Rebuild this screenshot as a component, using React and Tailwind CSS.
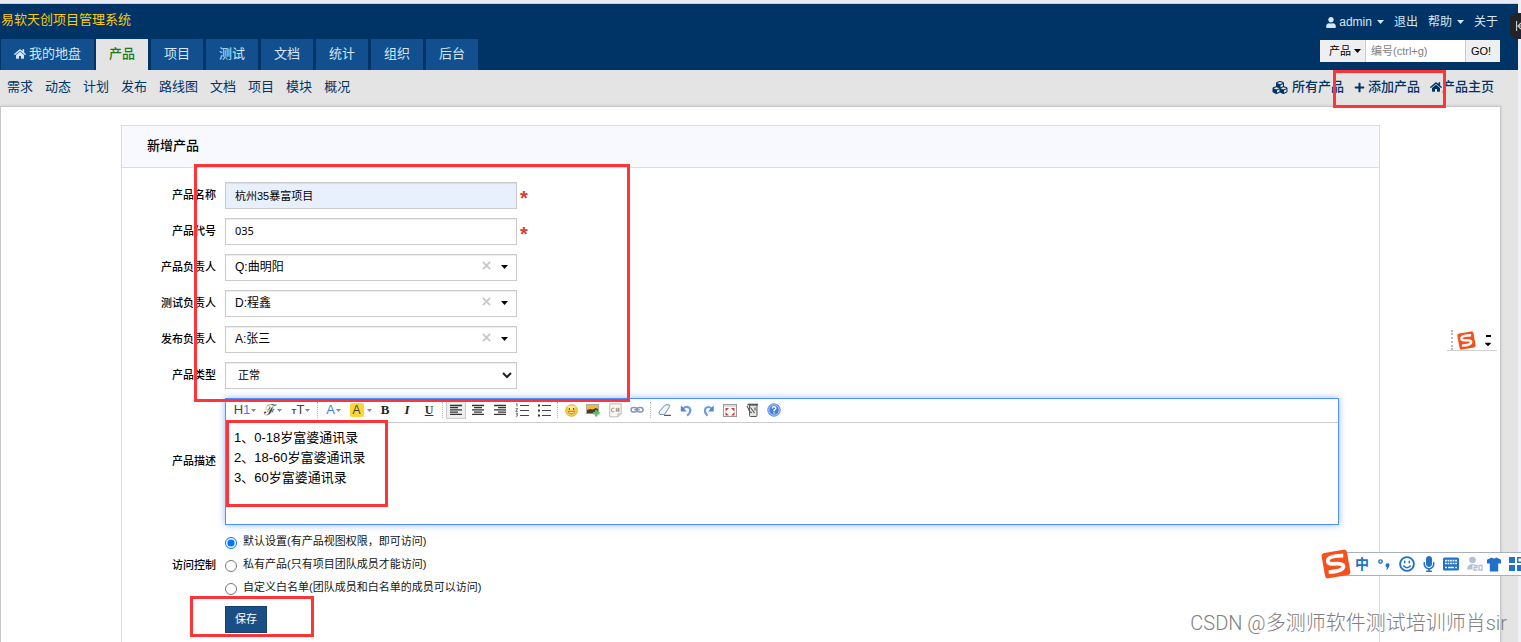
import { useState } from "react";
import {
  FaHome,
  FaUser,
  FaPlus,
  FaCubes,
  FaMicrophone,
  FaCaretDown,
} from "react-icons/fa";

const tabs = ["产品", "项目", "测试", "文档", "统计", "组织", "后台"];
const subMenu = ["需求", "动态", "计划", "发布", "路线图", "文档", "项目", "模块", "概况"];
const owners = [
  { id: "po", label: "产品负责人", value: "Q:曲明阳" },
  { id: "qd", label: "测试负责人", value: "D:程鑫" },
  { id: "rd", label: "发布负责人", value: "A:张三" },
];
const aclOptions = [
  { value: "open", text: "默认设置(有产品视图权限，即可访问)" },
  { value: "private", text: "私有产品(只有项目团队成员才能访问)" },
  { value: "custom", text: "自定义白名单(团队成员和白名单的成员可以访问)" },
];

const control =
  "block h-[27px] w-full border border-[#cbcbcb] pl-[9px] text-black shadow-[inset_0_1px_1px_rgba(0,0,0,0.08)] outline-none";

function Caret({ className = "" }) {
  return (
    <svg className={`h-1 w-[7px] ${className}`} viewBox="0 0 7 4" fill="currentColor">
      <path d="M0 0h7L3.5 4z" />
    </svg>
  );
}

function Header() {
  return (
    <header className="flex justify-between bg-[#003366] pl-px pr-[18px]">
      <div>
        <h1 className="flex h-[35px] items-center pb-1 text-[13px] leading-5 text-[#ffcc00]">
          易软天创项目管理系统
        </h1>
        <nav className="flex h-[31px] text-[13px] text-[#d5e6f5]">
          <a href="#my" className="mr-0.5 flex items-center gap-[3px] bg-[#114f8e] px-[13px] pb-0.5">
            <FaHome className="h-3 w-3" />
            我的地盘
          </a>
          {tabs.map((tab, i) => (
            <a
              key={tab}
              href="#tab"
              className={
                i === 0
                  ? "mr-[3px] flex items-center bg-[#e4e4e4] px-[13px] pb-0.5 font-medium text-[#1a7a1a]"
                  : "mr-[3px] flex items-center bg-[#114f8e] px-[13px] pb-0.5"
              }
            >
              {tab}
            </a>
          ))}
        </nav>
      </div>
      <div className="flex flex-col items-end">
        <div className="flex h-9 items-center gap-2.5 pr-0.5 text-[12px] text-[#d5e6f5]">
          <a href="#user" className="flex items-center">
            <FaUser className="mr-[3px] h-[11px] w-[10px]" />
            admin
            <Caret className="ml-[5px]" />
          </a>
          <a href="#logout">退出</a>
          <a href="#help" className="flex items-center">
            帮助
            <Caret className="ml-[5px]" />
          </a>
          <a href="#about">关于</a>
        </div>
        <form className="flex h-[22px] text-[11px]">
          <button
            type="button"
            className="flex w-[46px] items-center justify-end gap-[3px] border-r border-[#ccc] bg-[#efefef] pr-1 text-black"
          >
            产品 <Caret />
          </button>
          <input
            type="text"
            aria-label="编号"
            placeholder="编号(ctrl+g)"
            className="w-[99px] bg-white px-[5px] outline-none placeholder:text-[#808080]"
          />
          <button type="button" className="w-[35px] border-l border-[#ccc] bg-[#efefef] pr-1 text-black">
            GO!
          </button>
        </form>
      </div>
    </header>
  );
}

function SubHeader() {
  return (
    <div className="flex h-9 items-center justify-between pl-[7px] pr-6 pb-0.5 text-[13px] text-[#003366]">
      <nav className="flex gap-3">
        {subMenu.map((item) => (
          <a key={item} href="#sub">
            {item}
          </a>
        ))}
      </nav>
      <nav className="flex items-center gap-2.5 font-medium">
        <a href="#all" className="flex items-center gap-1">
          <FaCubes className="h-[15px] w-4" />
          所有产品
        </a>
        <a href="#create" className="flex items-center gap-[3px]">
          <FaPlus className="h-[11px] w-[11px]" />
          添加产品
        </a>
        <a href="#home" className="flex items-center">
          <FaHome className="h-3 w-3" />
          产品主页
        </a>
      </nav>
    </div>
  );
}

function Row({ label, htmlFor, className = "mb-[9px]", children }) {
  return (
    <div className={`flex items-center gap-[9px] ${className}`}>
      <label
        htmlFor={htmlFor}
        className="w-[94px] shrink-0 pb-0.5 text-right text-[11px] font-medium leading-4 text-black"
      >
        {label}
      </label>
      {children}
    </div>
  );
}

function ToolButton({ title, className = "w-[22px]", children }) {
  return (
    <button
      type="button"
      title={title}
      className={`flex h-5 shrink-0 items-center justify-center text-[#444] ${className}`}
    >
      {children}
    </button>
  );
}

function Separator() {
  return (
    <span className="flex h-4 w-[5px] shrink-0 justify-center">
      <i className="border-l border-dotted border-[#bbb]" />
    </span>
  );
}

function Lines({ d }) {
  return (
    <svg width="14" height="14" viewBox="0 0 14 14" stroke="#333" strokeWidth="1.3">
      <path d={d} />
    </svg>
  );
}

function SmallCaret() {
  return <Caret className="ml-px h-[3px]! w-[5px]! text-[#888]" />;
}

function Toolbar() {
  return (
    <div className="flex h-6 items-center overflow-hidden border-b border-[#ccc] pl-[5px] pb-px">
      <ToolButton title="段落" className="w-7 text-[13px]">
        H<span className="text-[#3f7fe0]">1</span>
        <SmallCaret />
      </ToolButton>
      <ToolButton title="字体" className="w-7 font-['Liberation_Serif',serif] text-[15px]">
        ℱ
        <SmallCaret />
      </ToolButton>
      <ToolButton title="文字大小" className="w-7 text-[13px]">
        <span className="self-end pb-0.5 text-[8px] font-bold">T</span>T
        <SmallCaret />
      </ToolButton>
      <Separator />
      <ToolButton title="文字颜色" className="w-[27px] text-[13px]">
        <span className="text-[#3f7fe0]">A</span>
        <SmallCaret />
      </ToolButton>
      <ToolButton title="文字背景" className="w-[27px] text-[12px]">
        <span className="mr-0.5 h-[14px] w-[14px] rounded-xs bg-[#fdd535] leading-[14px]">A</span>
        <SmallCaret />
      </ToolButton>
      <ToolButton title="粗体">
        <b className="font-['Liberation_Serif',serif] text-[13px] font-bold text-[#222]">B</b>
      </ToolButton>
      <ToolButton title="斜体">
        <i className="font-['Liberation_Serif',serif] text-[13px] font-bold text-[#222]">I</i>
      </ToolButton>
      <ToolButton title="下划线">
        <u className="font-['Liberation_Serif',serif] text-[12px] font-bold text-[#333]">U</u>
      </ToolButton>
      <Separator />
      <ToolButton title="左对齐">
        <span className="flex h-[18px] w-5 items-center justify-center border border-[#ccc] bg-[#eee]">
          <Lines d="M1 2.5h12M1 4.7h8M1 6.9h12M1 9.1h8M1 11.3h12" />
        </span>
      </ToolButton>
      <ToolButton title="居中">
        <Lines d="M1 2.5h12M3 4.7h8M1 6.9h12M3 9.1h8M1 11.3h12" />
      </ToolButton>
      <ToolButton title="右对齐">
        <Lines d="M1 2.5h12M5 4.7h8M1 6.9h12M5 9.1h8M1 11.3h12" />
      </ToolButton>
      <ToolButton title="编号">
        <svg width="14" height="14" viewBox="0 0 14 14" fill="none" stroke="#444">
          <path d="M5 2.5h9M5 7.5h9M5 12.5h9" />
          <path strokeWidth=".8" d="M1 1l1-.5v3M.6 5.6h2L.8 8.3h2M.7 10.2h2l-1 1.3q1.2 0 1 1-.6 1-2 .6" />
        </svg>
      </ToolButton>
      <ToolButton title="项目符号">
        <svg width="14" height="14" viewBox="0 0 14 14" fill="#333" stroke="#444">
          <path d="M5 2.5h9M5 7.5h9M5 12.5h9" />
          <path stroke="none" d="M1 1.5h2v2H1zM1 6.5h2v2H1zM1 11.5h2v2H1z" />
        </svg>
      </ToolButton>
      <Separator />
      <ToolButton title="表情">
        <svg width="13" height="13" viewBox="0 0 13 13">
          <circle cx="6.5" cy="6.5" r="6" fill="#fbc83c" stroke="#e3a52a" strokeWidth=".6" />
          <ellipse cx="6.5" cy="3.6" rx="4" ry="2.2" fill="#fde69a" />
          <path d="M4.4 4v1.8M8.6 4v1.8" stroke="#7a4b10" strokeWidth="1.2" />
          <path d="M3 7.6q3.5 4.4 7 0z" fill="#fff" stroke="#9a6215" strokeWidth=".7" />
        </svg>
      </ToolButton>
      <ToolButton title="图片">
        <svg width="14" height="14" viewBox="0 0 14 14">
          <rect x=".5" y="1.5" width="12" height="9" fill="#f5b73b" stroke="#aaa" />
          <path d="M1 7l3-1 3 .6L9.5 5 12 6v4.2H1z" fill="#4a3b25" />
          <path d="M10.3 7v6.600M7 10.300h6.600" stroke="#5cbf62" strokeWidth="2.400" />
        </svg>
      </ToolButton>
      <ToolButton title="插入代码">
        <svg width="13" height="15" viewBox="0 0 13 15">
          <path d="M.8.8h11.400v10l-3 3H.8z" fill="#f7f7f5" stroke="#bbb" />
          <path d="M9 14v-3.200h3.200" fill="#ddd" stroke="#bbb" />
          <path d="M5.400 5.200q-3-.9-3 1.800t3 1.600M7.700 4.800v4M9.600 4.800v4M6.700 6h4M6.700 7.800h4" fill="none" stroke="#b09878" />
        </svg>
      </ToolButton>
      <ToolButton title="超级链接">
        <svg width="14" height="8" viewBox="0 0 14 8" fill="none" stroke="#8496b3" strokeWidth="1.500">
          <rect x="1" y="1.500" width="6" height="4.600" rx="2.300" />
          <rect x="7" y="1.500" width="6" height="4.600" rx="2.300" />
          <path d="M4 3.800h6" strokeWidth="1.200" />
        </svg>
      </ToolButton>
      <Separator />
      <ToolButton title="删除格式">
        <svg width="13" height="12" viewBox="0 0 13 12" fill="#f2f6fc" stroke="#6d87b5">
          <path d="M1 8l5.500-6.400q.6-.7 1.500-.7h3q1.400.3.6 1.600L7 9.600q-.6.8-1.600.8H2Q.4 9.700 1 8z" />
          <path d="M6 11.300h7" stroke="#333" />
        </svg>
      </ToolButton>
      <ToolButton title="后退">
        <svg width="13" height="13" viewBox="0 0 13 13">
          <path d="M3 4.500q3.500-3 6.500-.5 2.500 3.500-2.500 7.700" fill="none" stroke="#6f9be0" strokeWidth="2.200" />
          <path d="M.8 1.300v6.200h6z" fill="#5384d6" />
        </svg>
      </ToolButton>
      <ToolButton title="前进">
        <svg width="13" height="13" viewBox="0 0 13 13">
          <path d="M9.500 4.500q-3.500-3-6 0-1.800 3.500 2 7.200" fill="none" stroke="#6f9be0" strokeWidth="2.200" />
          <path d="M11.700 1.300v6.200h-5.500z" fill="#5384d6" />
        </svg>
      </ToolButton>
      <ToolButton title="全屏显示">
        <svg width="14" height="13" viewBox="0 0 14 13">
          <rect x=".5" y=".5" width="13" height="12" fill="#fff" stroke="#999" />
          <path d="M1 2h12" stroke="#bbb" />
          <path d="M2.500 4H6L2.500 7.500zM11.500 4H8l3.500 3.500zM2.500 11.500H6L2.500 8zM11.500 11.500H8L11.500 8z" fill="#d63a3a" />
        </svg>
      </ToolButton>
      <ToolButton title="HTML代码">
        <svg width="13" height="14" viewBox="0 0 13 14" fill="#e3e3e3" stroke="#555">
          <path d="M3.500 2v10.500q0 1 1 1h5.500q1 0 1-1V2z" />
          <path d="M1.500 1.500H12" strokeWidth="1.600" />
          <path d="M1 3l3 6 2 .5M4.500 4.500l4 5.500M9 4.500v3" fill="none" strokeWidth="1.100" />
        </svg>
      </ToolButton>
      <ToolButton title="帮助">
        <svg width="14" height="14" viewBox="0 0 14 14" fill="none">
          <circle cx="7" cy="7" r="6.200" fill="#4a7fe0" stroke="#5e8fdf" />
          <circle cx="7" cy="7" r="5.200" stroke="#cfe0fa" strokeWidth=".8" />
          <path d="M5.200 5.400Q5.400 3.700 7 3.700q1.900.1 1.800 1.600Q8.600 6.300 7 7.400v.9M7 9.300v1.200" stroke="#fff" strokeWidth="1.300" />
        </svg>
      </ToolButton>
    </div>
  );
}

function ProductForm() {
  const [acl, setAcl] = useState("open");

  return (
    <form className="pr-10 pt-3.5">
      <Row label="产品名称" htmlFor="name">
        <div className="w-[292px]">
          <input
            id="name"
            type="text"
            defaultValue="杭州35暴富项目"
            className={`${control} bg-[#e8effd] pb-0.5 text-[11px]`}
          />
        </div>
        <Required />
      </Row>
      <Row label="产品代号" htmlFor="code">
        <div className="w-[292px]">
          <input
            id="code"
            type="text"
            defaultValue="035"
            className={`${control} pb-0.5 font-['Noto_Sans','Noto_Sans_CJK_SC',sans-serif] text-[11px]`}
          />
        </div>
        <Required />
      </Row>
      {owners.map((owner) => (
        <Row key={owner.id} label={owner.label} htmlFor={owner.id}>
          <div className="relative w-[292px]">
            <select id={owner.id} className={`${control} appearance-none bg-white pb-0.5 text-[12px]`}>
              <option>{owner.value}</option>
            </select>
            <button type="button" aria-label="清除" className="absolute right-[26px] top-[7px] text-[#c8c8c8]">
              <svg width="9" height="9" viewBox="0 0 10 10" stroke="currentColor" strokeWidth="2">
                <path d="M1 1l8 8M9 1L1 9" />
              </svg>
            </button>
            <Caret className="pointer-events-none absolute right-[9px] top-[11px] text-black" />
          </div>
        </Row>
      ))}
      <Row label="产品类型" htmlFor="type">
        <div className="relative w-[292px]">
          <select id="type" className={`${control} appearance-none bg-white pl-3! text-[11px]`}>
            <option>正常</option>
          </select>
          <svg
            className="pointer-events-none absolute right-[5px] top-2.5"
            width="10"
            height="7"
            viewBox="0 0 10 7"
            fill="none"
            stroke="#222"
            strokeWidth="2"
          >
            <path d="M1 1l4 4 4-4" />
          </svg>
        </div>
      </Row>
      <Row label="产品描述" htmlFor="desc" className="mb-1.5">
        <div className="relative flex-1 border border-[#4d90fe] bg-white shadow-[0_0_7px_rgba(77,144,254,0.6)]">
          <Toolbar />
          <textarea
            id="desc"
            className="block h-[101px] w-full resize-none px-2 pt-[5px] text-[13px] leading-5 text-black outline-none"
            defaultValue={"1、0-18岁富婆通讯录\n2、18-60岁富婆通讯录\n3、60岁富婆通讯录"}
          />
          <Mark className="left-0 top-[21px] h-[87px] w-[162px]" />
        </div>
      </Row>
      <Row label="访问控制" htmlFor="acl-open" className="mb-1.5">
        <div>
          {aclOptions.map((option) => (
            <label
              key={option.value}
              className="flex h-[23px] items-center gap-1.5 text-[11px] leading-4 text-[#141414]"
            >
              <input
                id={`acl-${option.value}`}
                type="radio"
                name="acl"
                checked={acl === option.value}
                onChange={() => setAcl(option.value)}
                className="h-3 w-3"
              />
              <span className="pb-[3px]">{option.text}</span>
            </label>
          ))}
        </div>
      </Row>
      <div className="relative pl-[103px]">
        <button
          type="button"
          className="h-[27px] w-[42px] border border-[#13426f] bg-[#1a4f85] text-[11px] text-white"
        >
          保存
        </button>
        <Mark className="-top-2.5 left-[68px] h-[41px] w-[124px]" />
      </div>
    </form>
  );
}

function Required() {
  return (
    <span className="-ml-1.5 pt-1 font-['Liberation_Sans',sans-serif] text-[20px] font-bold leading-5 text-[#d93a3a]">
      *
    </span>
  );
}

function Mark({ className }) {
  return <div className={`pointer-events-none absolute z-10 border-3 border-[#fd3538] ${className}`} />;
}

function SogouLogo({ size }) {
  return (
    <svg width={size} height={size} viewBox="0 0 28 28" className="shrink-0">
      <g transform="rotate(-10 14 14)">
        <rect x="2" y="2" width="24" height="24" rx="3" fill="#f4511e" />
        <path
          d="M22 7.500Q10 5.500 7.500 8.500 5.500 12.500 11 13.300 20.500 14 20.500 17.200 19.500 22 6 20.300"
          fill="none"
          stroke="#fff"
          strokeWidth="3.600"
        />
      </g>
    </svg>
  );
}

function ImeBar() {
  return (
    <div className="absolute right-0 top-[552px] z-10 flex h-6 w-[186px] items-center border-y border-[#a9b0bd] bg-white text-[#1f72c8]">
      <span className="absolute -left-3.5">
        <SogouLogo size={30} />
      </span>
      <div className="flex flex-1 items-center gap-2 overflow-hidden pl-5">
        <span className="w-3.5 shrink-0 text-[14px] font-bold leading-4">中</span>
        <svg width="14" height="14" viewBox="0 0 14 14" className="shrink-0">
          <circle cx="3.500" cy="4.500" r="1.700" fill="none" stroke="currentColor" strokeWidth="1.300" />
          <path d="M8.500 8a2 2 0 1 1 3.500 1.500q-.4 2.500-3 3.500.9-1.200 1-2.400Q8.600 10 8.500 8z" fill="currentColor" />
        </svg>
        <svg width="16" height="16" viewBox="0 0 16 16" fill="none" stroke="currentColor" className="shrink-0">
          <circle cx="8" cy="8" r="6.900" strokeWidth="1.900" />
          <path d="M5.700 4.800v2.400M10.300 4.800v2.400M4.300 9.500q3.700 4.400 7.400 0" strokeWidth="1.500" />
        </svg>
        <FaMicrophone className="-mx-px h-4 w-3.5 shrink-0" />
        <svg width="16" height="14" viewBox="0 0 16 14" className="shrink-0">
          <rect width="16" height="13" y=".5" rx="1.500" fill="currentColor" />
          <path d="M2 3.700h12M2 6.500h12" stroke="#fff" strokeWidth="1.700" strokeDasharray="1.800 .75" />
          <path d="M2 10.500h1.800M5 10.500h6M12.200 10.500H14" stroke="#fff" strokeWidth="1.700" />
        </svg>
        <svg width="16" height="16" viewBox="0 0 16 16" fill="#b5bfd6" className="shrink-0">
          <circle cx="5.500" cy="4" r="3.300" />
          <path d="M0 13.500Q.3 8 5.500 8q2 0 3 .8H5.500v4.700z" />
          <path d="M6.500 9.500H10v2H7v2.500h3.500M12 9.500h3v4.500h-3z" fill="none" stroke="#b5bfd6" strokeWidth="1.300" />
        </svg>
        <svg width="14" height="15" viewBox="0 0 14 15" fill="currentColor" className="-ml-1 shrink-0">
          <path d="M4.500.5Q7 2.500 9.500.5L14 2.800v3.700h-2.800V14.500H2.800V6.500H0V2.800z" />
        </svg>
        <svg width="14" height="14" viewBox="0 0 14 14" className="-mr-2 shrink-0">
          <path d="M0 0h6v6H0zM0 8h6v6H0zM8 8h6v6H8z" fill="currentColor" />
          <path d="M8.700.7h5v4.600h-5z" fill="none" stroke="currentColor" strokeWidth="1.400" />
        </svg>
      </div>
    </div>
  );
}

export default function App() {
  return (
    <div className="relative flex min-h-screen flex-col overflow-hidden bg-[#f0f1f6] pr-[3px] font-['Liberation_Sans','Noto_Sans_CJK_SC',sans-serif]">
      <div className="h-1 border-b border-[#c9cfdc] bg-[#e9ebf4]" />
      <div className="flex flex-1 flex-col bg-[#e4e4e4]">
        <Header />
        <SubHeader />
        <main className="mr-[17px] flex flex-1 flex-col border border-b-0 border-[#c8c8c8] bg-white px-[120px] pt-[18px] shadow-[0_0_3px_rgba(0,0,0,0.15)]">
          <section className="flex-1 border border-b-0 border-[#dcdcdc]">
            <h2 className="flex h-[42px] items-center border-b border-[#dcdcdc] bg-[#f8f9fe] pl-[25px] pb-0.5 text-[13px] font-medium text-black">
              新增产品
            </h2>
            <ProductForm />
          </section>
        </main>
      </div>

      <Mark className="right-[75px] top-[70px] h-[38px] w-[113px]" />
      <Mark className="left-[194px] top-[164px] h-[238px] w-[436px]" />

      <button
        type="button"
        aria-label="收起"
        className="absolute right-0 top-[13px] flex h-[26px] w-[11px] items-center justify-end rounded-l-md bg-[#222427] text-[#ccc]"
      >
        <svg width="5" height="10" viewBox="0 0 5 10" fill="none" stroke="currentColor">
          <path d="M.5 0v10M5 2L2 5l3 3M2 5h3" strokeWidth="1.200" />
        </svg>
      </button>

      <div className="absolute right-6 top-[330px] flex h-[21px] w-[50px] items-center border-b border-[#d0d0d0] pl-1">
        <span className="h-5 border-l-2 border-dotted border-[#bbb]" />
        <span className="ml-1">
          <SogouLogo size={19} />
        </span>
        <span className="ml-2 flex flex-col items-center gap-1 pt-1 text-black">
          <i className="h-0.5 w-[5px] bg-black" />
          <FaCaretDown className="-mt-0.5 h-2.5 w-2" />
        </span>
      </div>

      <ImeBar />

      <p className="pointer-events-none absolute right-3.5 top-[609px] whitespace-nowrap font-['Roboto','Noto_Sans_CJK_SC',sans-serif] text-[20px] font-light leading-7 text-[#808080]">
        CSDN @多测师软件测试培训师肖sir
      </p>
    </div>
  );
}
